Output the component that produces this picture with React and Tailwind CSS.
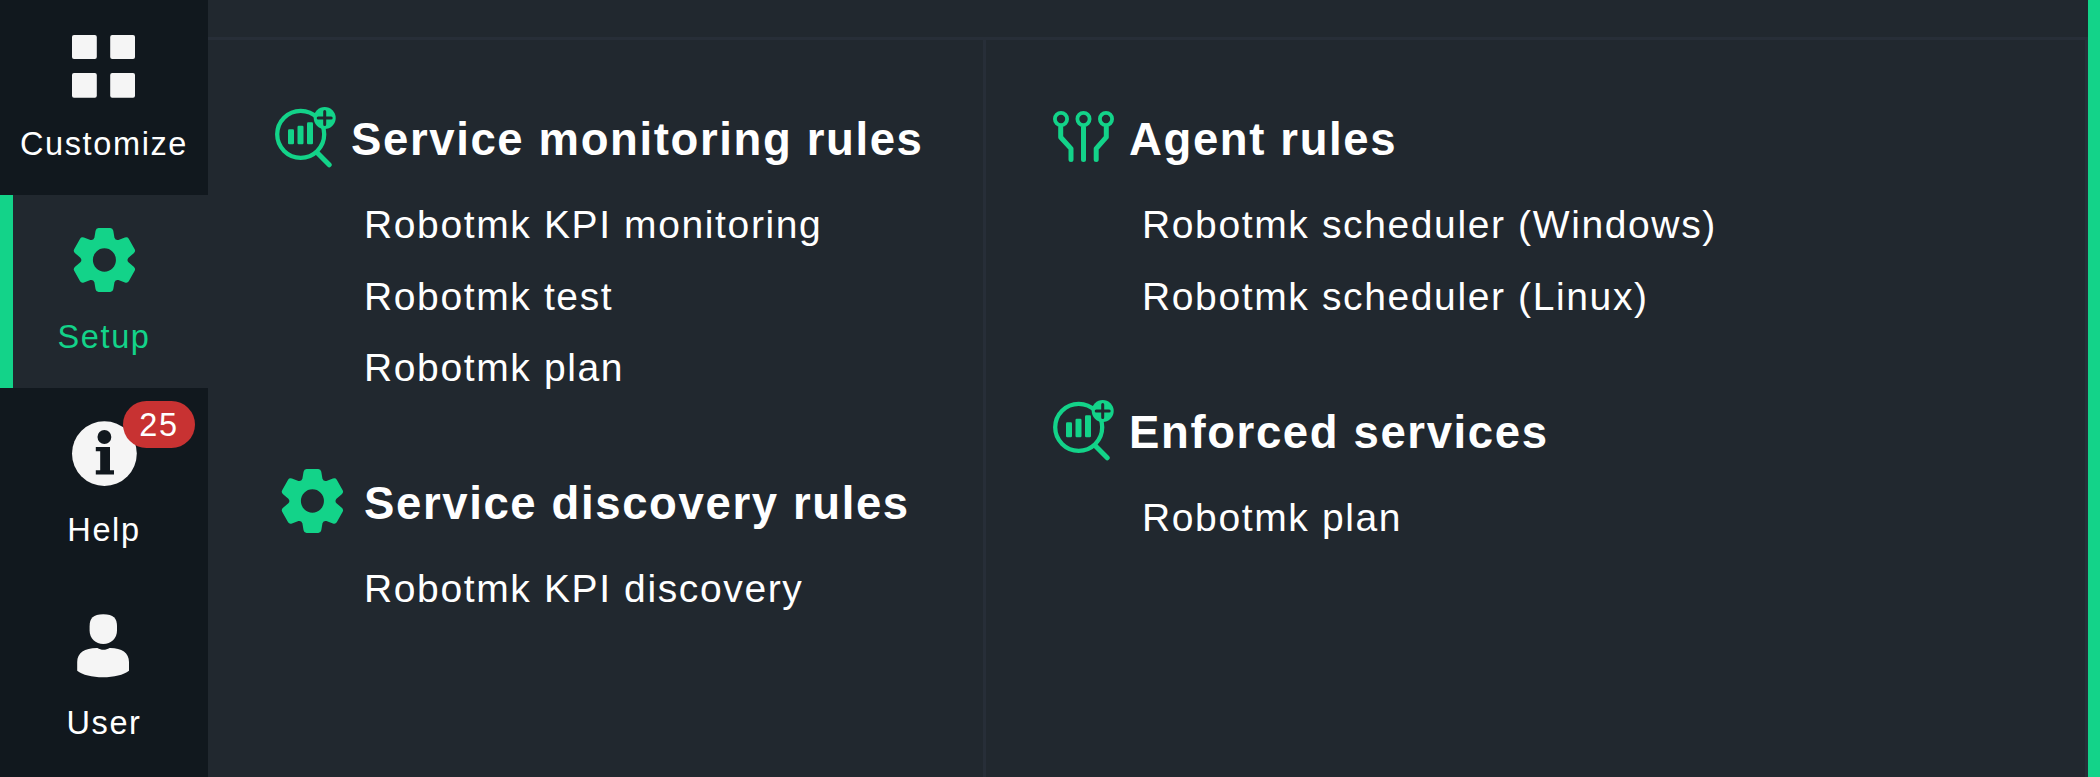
const GREEN = "#13d389";
const LIGHT = "#f5f5f5";

function gearPath() {
  const point = (x, y, deg) => {
    const a = (deg * Math.PI) / 180;
    const px = 32 + x * Math.cos(a) - y * Math.sin(a);
    const py = 32 + x * Math.sin(a) + y * Math.cos(a);
    return `${px.toFixed(2)} ${py.toFixed(2)}`;
  };
  let d = "";
  for (let k = 0; k < 6; k++) {
    const p = (x, y) => point(x, y, k * 60);
    d += `${k === 0 ? "M" : "L"}${p(-10.2, -22.3)}`;
    d += `L${p(-9, -29.2)}Q${p(-8.4, -32)} ${p(-6, -32)}`;
    d += `L${p(6, -32)}Q${p(8.4, -32)} ${p(9, -29.2)}`;
    d += `L${p(10.2, -22.3)}Q${p(11.2, -19.4)} ${p(14.2, -19.98)}`;
  }
  return d + "ZM32 20.3a11.7 11.7 0 1 0 0 23.4a11.7 11.7 0 1 0 0-23.4Z";
}

const GEAR = gearPath();

function GearIcon() {
  return (
    <svg className="block size-16 shrink-0 overflow-visible" viewBox="0 0 64 64">
      <path d={GEAR} fill={GREEN} fillRule="evenodd" transform="translate(0.9 0) scale(0.985 1)" />
    </svg>
  );
}

function CustomizeIcon() {
  return (
    <svg className="block size-16 shrink-0" viewBox="0 0 64 64" fill={LIGHT}>
      <rect x="0" y="0" width="24.8" height="24" rx="2" />
      <rect x="38.2" y="0" width="24.8" height="24" rx="2" />
      <rect x="0" y="38" width="24.8" height="24.8" rx="2" />
      <rect x="38.2" y="38" width="24.8" height="24.8" rx="2" />
    </svg>
  );
}

function HelpIcon() {
  return (
    <svg className="block size-16 shrink-0 overflow-visible" viewBox="0 0 64 64">
      <circle cx="32.4" cy="32.6" r="32.4" fill={LIGHT} />
      <circle cx="32.4" cy="16" r="6.9" fill="#11181e" />
      <path d="M23.8 26H38v23.2h4V53.6H23.8v-4.4h4.4V30.2h-4.4Z" fill="#11181e" />
    </svg>
  );
}

function UserIcon() {
  return (
    <svg className="block size-16 shrink-0" viewBox="0 0 64 64" fill={LIGHT}>
      <path d="M31.3 0.2C41.5 0.2 45 4.5 45 12V16.5C45 24.5 39 29.9 31.300 29.900S17.600 24.500 17.600 16.500V12C17.600 4.500 21.100 0.200 31.300 0.200Z" />
      <path d="M25.500 33.900C29 36.300 34 36.300 37.500 33.900C49.500 33.700 57 38.500 57 48V56.700C51.500 61 42 63.200 31 63.200S10.500 61 5.200 56.700V48C5.200 38.500 13 33.700 25.500 33.900Z" />
    </svg>
  );
}

function MonitoringIcon() {
  return (
    <svg className="block size-16 shrink-0" viewBox="0 0 64 64" fill="none">
      <circle cx="26.700" cy="30.300" r="23.500" stroke={GREEN} strokeWidth="4.300" />
      <path d="M43 48.500L55.200 60.800" stroke={GREEN} strokeWidth="5" strokeLinecap="round" />
      <rect x="14" y="25.300" width="6" height="15" rx="1.200" fill={GREEN} />
      <rect x="23.500" y="21.800" width="6" height="18.500" rx="1.200" fill={GREEN} />
      <rect x="33" y="18.300" width="6" height="22" rx="1.200" fill={GREEN} />
      <circle cx="50.700" cy="14" r="11" fill={GREEN} />
      <path d="M50.700 7.500V20.500M44.200 14H57.200" stroke="#21282f" strokeWidth="3" strokeLinecap="round" />
    </svg>
  );
}

function AgentIcon() {
  return (
    <svg className="block size-16 shrink-0" viewBox="0 0 64 64" fill="none" stroke={GREEN}>
      <g strokeWidth="3.800">
        <circle cx="9" cy="15" r="6.100" />
        <circle cx="31.500" cy="15" r="6.100" />
        <circle cx="54" cy="15" r="6.100" />
      </g>
      <g strokeWidth="5" strokeLinecap="round" strokeLinejoin="round">
        <path d="M8.700 23.500V33.200L19 44.600V55.500" />
        <path d="M31.500 23.500V55.500" />
        <path d="M54.300 23.500V33.200L44.200 44.600V55.500" />
      </g>
    </svg>
  );
}

function NavItem({ label, icon, active, badge }) {
  return (
    <a
      className={
        active
          ? "relative flex h-[193px] flex-col items-center border-l-[13px] border-[#13d389] bg-[#21282f] pt-[33px] pr-[13px] text-[#13d389]"
          : "relative flex h-[193px] flex-col items-center pt-[33px] text-white"
      }
    >
      {icon}
      <span className="mt-[25px] text-[32.5px] leading-10 tracking-[1.625px] whitespace-nowrap">{label}</span>
      {badge && (
        <span className="absolute top-[13px] left-[123px] flex h-[47px] w-[72px] items-center justify-center rounded-full bg-[#c83232] pt-0.5 text-[32.5px] leading-[45px] tracking-[1.625px] text-white">
          {badge}
        </span>
      )}
    </a>
  );
}

function Topic({ title, icon, items, wide }) {
  return (
    <section>
      <div className={wide ? "flex h-[72px] pl-[72px]" : "flex h-[72px] pl-[66px]"}>
        <div className={wide ? "pt-px" : "pt-0"}>{icon}</div>
        <h2
          className={
            wide
              ? "ml-5 text-[45.5px] leading-[72px] font-bold tracking-[1.625px] whitespace-nowrap"
              : "ml-[13px] text-[45.5px] leading-[72px] font-bold tracking-[1.625px] whitespace-nowrap"
          }
        >
          {title}
        </h2>
      </div>
      <ul className="mt-[13px] pl-[156px]">
        {items.map((item) => (
          <li key={item} className="h-[71.5px] text-[39px] leading-[71.5px] tracking-[1.625px] whitespace-nowrap">
            {item}
          </li>
        ))}
      </ul>
    </section>
  );
}

export default function App() {
  return (
    <div className="flex h-[777px] w-[2100px] overflow-hidden bg-[#21282f] font-['Liberation_Sans',Arial,sans-serif] text-white">
      <nav className="flex w-[208px] shrink-0 flex-col bg-[#11181e] pt-[2px]">
        <NavItem label="Customize" icon={<CustomizeIcon />} />
        <NavItem label="Setup" icon={<GearIcon />} active />
        <NavItem label="Help" icon={<HelpIcon />} badge="25" />
        <NavItem label="User" icon={<UserIcon />} />
      </nav>
      <main className="flex flex-1 flex-col border-r-[12px] border-[#13d389]">
        <div className="h-10 shrink-0 border-b-[3px] border-[#272e38]" />
        <div className="flex flex-1">
          <div className="flex w-[778px] shrink-0 flex-col gap-[64.5px] border-r-[3px] border-[#272e38] pt-16">
            <Topic
              title="Service monitoring rules"
              icon={<MonitoringIcon />}
              items={["Robotmk KPI monitoring", "Robotmk test", "Robotmk plan"]}
            />
            <Topic title="Service discovery rules" icon={<GearIcon />} items={["Robotmk KPI discovery"]} wide />
          </div>
          <div className="flex flex-1 flex-col gap-[64.5px] border-r-[3px] border-[#272e38] pt-16">
            <Topic
              title="Agent rules"
              icon={<AgentIcon />}
              items={["Robotmk scheduler (Windows)", "Robotmk scheduler (Linux)"]}
            />
            <Topic title="Enforced services" icon={<MonitoringIcon />} items={["Robotmk plan"]} />
          </div>
        </div>
      </main>
    </div>
  );
}
